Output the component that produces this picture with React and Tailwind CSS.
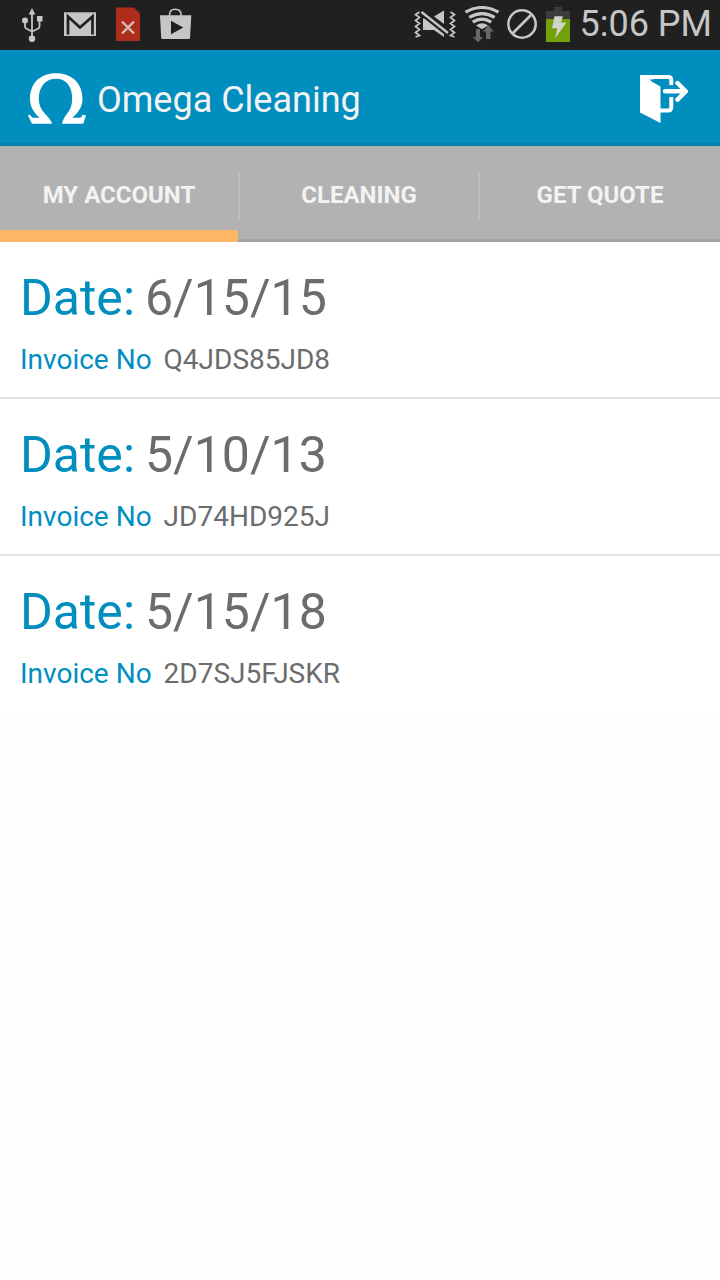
const invoices = [
  { date: "6/15/15", number: "Q4JDS85JD8" },
  { date: "5/10/13", number: "JD74HD925J" },
  { date: "5/15/18", number: "2D7SJ5FJSKR" },
];

const tabs = ["MY ACCOUNT", "CLEANING", "GET QUOTE"];

function UsbIcon() {
  return (
    <svg className="h-9 w-6" viewBox="20 5 24 36" fill="none" stroke="#c6c6c6" strokeWidth="1.8" aria-label="USB connected">
      <path d="M32 11V36M25 20v5.5q0 1.500 1.500 2.200L32 30.500M39.500 18v7.500q0 1.500-1.500 2.200L32 30.500" />
      <g fill="#c6c6c6" stroke="none">
        <path d="M32 7l3.300 6.500h-6.600z" />
        <circle cx="25" cy="19.500" r="3" />
        <circle cx="32" cy="37.800" r="3.300" />
        <path d="M37 15h5.500v5.500H37z" />
      </g>
    </svg>
  );
}

function MailIcon() {
  return (
    <svg className="h-6 w-8" viewBox="64 11 32 24" aria-label="New mail">
      <path d="M64 11.300h32v24H64z" fill="#c6c6c6" />
      <path d="M68 33.500V15.500L80 26.500 92.500 15.500v18" fill="none" stroke="#202020" strokeWidth="2.700" strokeLinejoin="miter" />
    </svg>
  );
}

function SimErrorIcon() {
  return (
    <svg className="h-[34px] w-6" viewBox="116 7 24 34" aria-label="No SIM card">
      <path d="M116 7.500h18l6 6V41h-24z" fill="#ae2c1a" />
      <path d="M122 21.500l12 12M134 21.500l-12 12" stroke="#d6c0bc" strokeWidth="2.300" />
    </svg>
  );
}

function StoreIcon() {
  return (
    <svg className="h-8 w-8" viewBox="160 6 32 32" aria-label="Play Store">
      <path d="M169.500 14v-1.200q0-5.500 5.800-5.500t5.800 5.500V14" fill="none" stroke="#c6c6c6" strokeWidth="1.500" />
      <path d="M160 13.300h31.300L190 36q-.1 1-1.200 1h-26.400q-1.100 0-1.200-1z" fill="#c6c6c6" />
      <path d="M171 18.800v13.500l12.200-6.800z" fill="#202020" />
    </svg>
  );
}

function VibrateOffIcon() {
  return (
    <svg className="h-8 w-11" viewBox="413 8 44 32" aria-label="Muted">
      <path
        d="M418.500 12l-4 2.500 4 3-4 3 4 3-4 3 4 3-4 3 4 3-4 1.500M449.500 12l4 2.500-4 3 4 3-4 3 4 3-4 3 4 3-4 3 4 1.500"
        fill="none" stroke="#c6c6c6" strokeWidth="1.700"
      />
      <path d="M422 18.500h3L443 33v4L433 30h-11z" fill="#c6c6c6" />
      <path d="M433 16.500l10-6v13.500z" fill="#c6c6c6" />
      <path d="M421 14.500L445.500 34" stroke="#202020" strokeWidth="3.500" />
      <path d="M420.500 12L447 33" stroke="#c6c6c6" strokeWidth="2.300" />
    </svg>
  );
}

function WifiIcon() {
  return (
    <svg className="h-9 w-9" viewBox="463 6 36 36" fill="none" stroke="#c6c6c6" strokeWidth="3.200" aria-label="Wi-Fi">
      <path d="M464.500 12.200Q481 2.800 497.500 12.200M468.300 17.300Q481 9.800 493.700 17.300M471.800 22.200Q481 16 490.200 22.200" />
      <path d="M475 25.600q6-4.500 12 0l-6 3.600z" fill="#c6c6c6" stroke="none" />
      <path d="M475 29h4v8h3l-5 5.500-5-5.500h3zM485 39h4.500v-7.500h3.200L487.300 25l-5.300 6.500h3z" fill="#686868" stroke="none" />
    </svg>
  );
}

function BlockedIcon() {
  return (
    <svg className="h-8 w-8" viewBox="505 8 32 32" fill="none" stroke="#c6c6c6" strokeWidth="2.600" aria-label="Blocking mode">
      <circle cx="521" cy="24" r="13.700" />
      <path d="M511.500 33.500l19-19" />
    </svg>
  );
}

function BatteryIcon() {
  return (
    <svg className="h-9 w-[26px]" viewBox="543 6 26 36" aria-label="Battery charging">
      <path d="M553 7h8v4h8v8h-24v-8h8z" fill="#3b3b3b" />
      <path d="M545 19h24v23h-24z" fill="#72a10a" />
      <path d="M553.500 16.300h8.300L560 22.500h5.500L554 38.500l2.300-10.200H551z" fill="#d0d3c8" />
    </svg>
  );
}

function OmegaLogo() {
  return (
    <svg className="h-[52px] w-[60px]" viewBox="27 72 60 52" fill="#fff" aria-hidden="true">
      <path d="M32 122.700L28 114.500l1.500-1 3 3.300h7.300C34 112 30 106 30 98 30 82 40.500 72.300 56 72.300S82.500 82 82.500 98c0 8-4.500 14-10.200 18.800h7.400c1.300 0 2-1 2.800-3l3.500.7-2.800 8.200H62c1-4 2.300-6.700 5-10 3.500-4.200 5.200-9 5.200-15 0-12.500-6.200-20-16.200-20s-17.200 7.500-17.200 20c0 6 2.200 10.800 6.200 15 3.200 3.500 5.700 6 7.200 10z" />
    </svg>
  );
}

function ExitIcon() {
  return (
    <svg className="size-12" viewBox="640 75 48 48" fill="none" stroke="#fff" strokeWidth="4" aria-hidden="true">
      <path d="M640 75h20L651 81l9.500 5.500V123L640 112.500z" fill="#fff" stroke="none" />
      <path d="M642 77h26q3.300 0 3.300 3.300V85M671.300 97v10q0 3.500-3.300 3.500h-8" />
      <path d="M665 91.300h20M677.500 83l8.300 8.300-8.300 8.300" strokeWidth="4.400" strokeLinecap="round" />
      <path d="M649 79.500h11.500v7z" fill="#008ebf" stroke="none" />
    </svg>
  );
}

export default function App() {
  return (
    <div className="flex min-h-screen flex-col bg-[#fefefc] font-[Roboto,sans-serif] text-[#6b6c6e]">
      <div className="flex h-[50px] items-center justify-between bg-[#202020] pr-2 pb-0.5 pl-5 text-[#c6c6c6]">
        <div className="flex items-center gap-5">
          <UsbIcon />
          <MailIcon />
          <SimErrorIcon />
          <StoreIcon />
        </div>
        <div className="flex items-center gap-1.5">
          <VibrateOffIcon />
          <WifiIcon />
          <BlockedIcon />
          <BatteryIcon />
          <time className="ml-1 text-4xl">5:06 PM</time>
        </div>
      </div>

      <header className="flex h-24 items-center justify-between border-b-3 border-[#0082b0] bg-[#008ebf] pt-1 pr-8 pl-[27px]">
        <div className="flex items-center gap-2.5">
          <OmegaLogo />
          <h1 className="pt-0.5 text-4xl text-[#f3f3f3]">Omega Cleaning</h1>
        </div>
        <button type="button" aria-label="Log out">
          <ExitIcon />
        </button>
      </header>

      <nav className="flex h-24 bg-[#b2b2b2]">
        {tabs.map((tab, i) => (
          <div key={tab} className="flex flex-1 items-center">
            <button
              type="button"
              aria-current={i === 0 ? "page" : undefined}
              className={`h-full flex-1 text-2xl font-bold text-[#f3f3f3] ${
                i === 0 ? "border-b-12 border-[#ffb766] pt-3.5" : "border-b-3 border-[#a3a3a3] pt-1"
              }`}
            >
              {tab}
            </button>
            {i < tabs.length - 1 && (
              <span className="flex h-full items-center border-b-3 border-[#a3a3a3] pt-1">
                <span className="h-12 w-0.5 bg-[#bebebe]" />
              </span>
            )}
          </div>
        ))}
      </nav>

      <main>
        <ul className="divide-y-2 divide-[#e2e2e2] bg-white">
          {invoices.map((invoice) => (
            <li key={invoice.number} className="flex h-[157px] flex-col px-5 pt-6">
              <p className="flex gap-2.5 text-[50px] leading-[64px]">
                <span className="text-[#008ebf]">Date:</span>
                <span>{invoice.date}</span>
              </p>
              <p className="flex gap-3 pt-3 text-[28px] leading-9">
                <span className="text-[#008ebf]">Invoice No</span>
                <span>{invoice.number}</span>
              </p>
            </li>
          ))}
        </ul>
      </main>
    </div>
  );
}
